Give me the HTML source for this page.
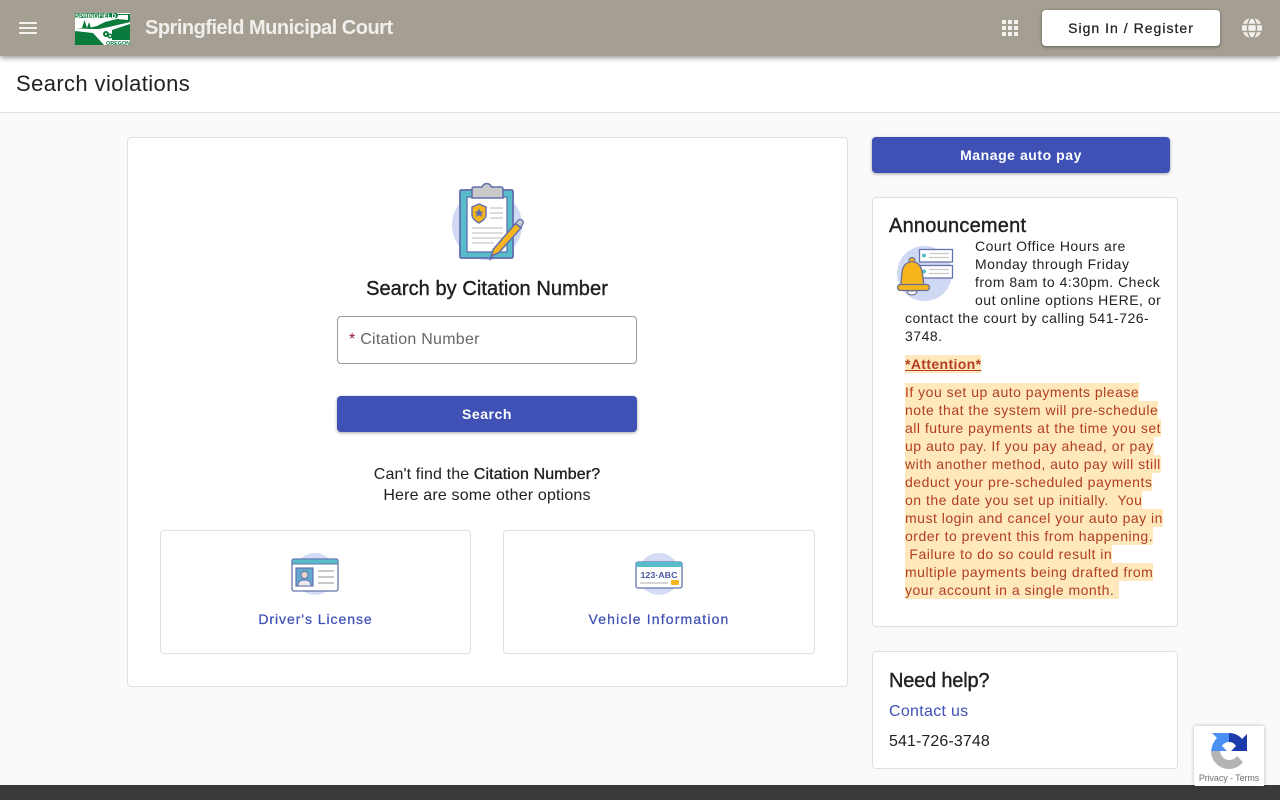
<!DOCTYPE html>
<html lang="en"><head><meta charset="utf-8"><title>Search violations</title>
<style>
html,body{margin:0;padding:0}
body{width:1280px;height:800px;overflow:hidden;position:relative;background:#fafafa;font-family:"Liberation Sans",Arial,sans-serif;color:#212121}
.a{position:absolute}
.t{position:absolute;white-space:nowrap}
.c{text-align:center}
.card{position:absolute;background:#fff;border:1px solid #e0e0e0;border-radius:4px;box-sizing:border-box}
.btn{position:absolute;background:#3f51b5;color:#fff;border-radius:4px;font-weight:700;font-size:14px;text-align:center;letter-spacing:.55px;box-shadow:0 1px 3px rgba(0,0,0,.35)}
.l{position:absolute;left:905px;white-space:nowrap;font-size:14px;line-height:18px;height:18px;color:#222;letter-spacing:.5px}
.h{background:#ffe8bc;color:#b03f22}
</style></head><body>
<div class="a" style="left:0;top:0;width:1280px;height:56px;background:#a59e92;box-shadow:0 2px 5px rgba(0,0,0,.4);z-index:2"></div>
<div style="position:absolute;left:0;top:0;z-index:3;width:1280px;height:56px">
<svg class="a" style="left:16px;top:16px" width="24" height="24" viewBox="0 0 24 24"><path fill="#f4f2ee" d="M3 18h18v-2H3v2zm0-5h18v-2H3v2zm0-7v2h18V6H3z"/></svg>
<svg class="a" style="left:75px;top:13px" width="55" height="32" viewBox="0 0 55 32">
<rect width="55" height="32" fill="#0b7a3d"/>
<path fill="#fff" d="M42 0h13v1H42zM0 5h42l1-3h10v5L42 6 30 9l-8 4-8 2H0z"/>
<path fill="#0b7a3d" d="M7 15l2.500-8 2.500 8zM12 15l2-6 2 6z"/>
<path fill="#fff" d="M0 15l14 1h10l10-2 21-5v2L40 16l-3 1v10h18v5H29L18 20 0 18z"/>
<circle cx="31" cy="21" r="3" fill="#0b7a3d"/><circle cx="35" cy="23" r="2.500" fill="#0b7a3d"/>
<circle cx="31" cy="21" r="1" fill="#fff"/><circle cx="35" cy="23" r="1" fill="#fff"/>
<text x="0" y="5" font-family="Liberation Sans" font-size="6" font-weight="700" fill="#fff" textLength="41" lengthAdjust="spacingAndGlyphs">SPRINGFIELD</text>
<text x="31" y="32" font-family="Liberation Sans" font-size="5.500" font-weight="700" fill="#0b7a3d" textLength="24" lengthAdjust="spacingAndGlyphs">OREGON</text>
</svg>
<div class="t" style="left:145px;top:16px;font-size:20px;line-height:24px;font-weight:700;color:#f1efeb;letter-spacing:-.5px">Springfield Municipal Court</div>
<svg class="a" style="left:1002px;top:20px" width="16" height="16" viewBox="0 0 16 16"><path fill="#f4f2ee" d="M0 0h4v4H0zM6 0h4v4H6zM12 0h4v4h-4zM0 6h4v4H0zM6 6h4v4H6zM12 6h4v4h-4zM0 12h4v4H0zM6 12h4v4H6zM12 12h4v4h-4z"/></svg>
<div class="a" style="left:1042px;top:10px;width:178px;height:36px;background:#fff;border-radius:4px;box-shadow:0 1px 3px rgba(0,0,0,.4);text-align:center;font-size:14px;line-height:36px;font-weight:400;letter-spacing:1.02px;color:#222;-webkit-text-stroke:.25px #222">Sign In / Register</div>
<svg class="a" style="left:1240px;top:16px" width="24" height="24" viewBox="0 0 24 24"><circle cx="12" cy="12" r="10" fill="#f4f2ee"/><g fill="none" stroke="#a59e92" stroke-width="1.500"><ellipse cx="12" cy="12" rx="4.500" ry="10"/><path d="M2.500 8.500h19M2.500 15.500h19"/></g></svg>
</div>
<div class="a" style="left:0;top:56px;width:1280px;height:57px;background:#fff;border-bottom:1px solid #e0e0e0;box-sizing:border-box"></div>
<div class="t" style="left:16px;top:70px;font-size:22px;line-height:28px;letter-spacing:.39px;color:#212121">Search violations</div>

<div class="card" style="left:127px;top:137px;width:721px;height:550px"></div>
<svg class="a" style="left:450px;top:180px" width="76" height="84" viewBox="0 0 76 84">
<circle cx="37" cy="45" r="35" fill="#cfd9f3"/>
<rect x="10" y="10" width="53" height="68" rx="1.500" fill="#58bcca" stroke="#5f6fae" stroke-width="1.800"/>
<rect x="17" y="17" width="40" height="55" fill="#fff" stroke="#5f6fae" stroke-width="1.300"/>
<path d="M22 18V9a2 2 0 0 1 2-2h8a5 5 0 0 1 9.500 0H51a2 2 0 0 1 2 2v9z" fill="#c9c9c9" stroke="#5f6fae" stroke-width="1.600"/>
<path d="M22 27l7-3 7 3v8c0 3-3.500 6-7 8-3.500-2-7-5-7-8z" fill="#f6b51d" stroke="#5f6fae" stroke-width="1.400"/>
<path d="M29 28.500l1.500 3 3 .4-2.200 2 .6 3-2.900-1.500-2.900 1.500.6-3-2.200-2 3-.4z" fill="#5f6fae"/>
<path d="M40 28h13M40 33h13M40 38h13M22 48h31M22 53h31M22 58h31M22 63h22" stroke="#c8c8c8" stroke-width="1.300"/>
<path d="M41 76l2.500-7 22-25.500 5.500 4.500-22.500 25z" fill="#f6b51d" stroke="#5f6fae" stroke-width="1.500"/>
<path d="M65.500 43.500l2.500-3a2.500 2.500 0 0 1 4.500 4l-1.500 3z" fill="#c9c9c9" stroke="#5f6fae" stroke-width="1.300"/>
<path d="M39 81l2-6 3 2.500z" fill="#5f6fae"/>
</svg>
<div class="t c" style="left:127px;width:720px;top:277px;font-size:20px;line-height:24px;letter-spacing:.07px;-webkit-text-stroke:.4px #212121">Search by Citation Number</div>
<div class="a" style="left:337px;top:316px;width:300px;height:48px;box-sizing:border-box;background:#fff;border:1px solid #9a9a9a;border-radius:4px"></div>
<div class="t" style="left:349px;top:329px;font-size:16px;line-height:22px;color:#666;letter-spacing:.26px"><span style="color:#8e1a3c">*</span> Citation Number</div>
<div class="btn" style="left:337px;top:396px;width:300px;height:36px;line-height:36px">Search</div>
<div class="t c" style="left:127px;width:720px;top:464px;font-size:16px;line-height:21px;letter-spacing:.12px">Can't find the <span style="-webkit-text-stroke:.35px #212121">Citation Number?</span></div>
<div class="t c" style="left:127px;width:720px;top:485px;font-size:16px;line-height:21px;letter-spacing:.17px">Here are some other options</div>

<div class="card" style="left:160px;top:530px;width:311px;height:124px"></div>
<div class="card" style="left:503px;top:530px;width:312px;height:124px"></div>
<svg class="a" style="left:290px;top:552px" width="50" height="44" viewBox="0 0 50 44">
<circle cx="25" cy="22" r="21" fill="#d3dcf4"/>
<rect x="2" y="7" width="46" height="32" rx="2" fill="#fff" stroke="#6573ae" stroke-width="1.300"/>
<path d="M2 12V9a2 2 0 0 1 2-2h42a2 2 0 0 1 2 2v3z" fill="#58bcc9" stroke="#6573ae" stroke-width="1"/>
<rect x="6" y="16" width="17" height="18" fill="#64a9d0" stroke="#6573ae" stroke-width="1.200"/>
<circle cx="14.500" cy="23" r="3.500" fill="#ead7c6" stroke="#6573ae"/>
<path d="M8 34c0-5 3-6 6.500-6s6.500 1 6.500 6z" fill="#e8e8ee" stroke="#6573ae"/>
<path d="M28 19h16M28 25h16M28 31h16" stroke="#c9c9c9" stroke-width="2"/>
</svg>
<svg class="a" style="left:634px;top:552px" width="50" height="44" viewBox="0 0 50 44">
<circle cx="25" cy="22" r="21" fill="#d3dcf4"/>
<rect x="2" y="10" width="46" height="26" rx="2" fill="#fff" stroke="#6573ae" stroke-width="1.300"/>
<path d="M2 15v-3a2 2 0 0 1 2-2h42a2 2 0 0 1 2 2v3z" fill="#58bcc9"/>
<text x="25" y="26" text-anchor="middle" font-family="Liberation Sans" font-size="8.500" font-weight="700" fill="#4a5a9f" textLength="37" lengthAdjust="spacingAndGlyphs">123·ABC</text>
<path d="M6 31h28" stroke="#c9c9c9" stroke-width="1.500"/>
<rect x="37" y="28" width="8" height="5" rx="1" fill="#f6b51d"/>
</svg>
<div class="t c" style="left:160px;width:311px;top:610px;font-size:14px;line-height:18px;color:#3f51b5;letter-spacing:.95px;-webkit-text-stroke:.25px #3f51b5">Driver's License</div>
<div class="t c" style="left:503px;width:312px;top:610px;font-size:14px;line-height:18px;color:#3f51b5;letter-spacing:1.15px;-webkit-text-stroke:.25px #3f51b5">Vehicle Information</div>

<div class="btn" style="left:872px;top:137px;width:298px;height:36px;line-height:36px">Manage auto pay</div>

<div class="card" style="left:872px;top:197px;width:306px;height:430px"></div>
<div class="t" style="left:889px;top:214px;font-size:20px;line-height:24px;letter-spacing:.23px;-webkit-text-stroke:.4px #212121">Announcement</div>
<svg class="a" style="left:895px;top:245px" width="60" height="58" viewBox="0 0 60 58">
<circle cx="29.500" cy="28.500" r="27.500" fill="#cfd9f3"/>
<rect x="24.500" y="4.500" width="33" height="12.500" fill="#fff" stroke="#6573ae" stroke-width="1.300"/>
<rect x="24.500" y="20.500" width="33" height="12.500" fill="#fff" stroke="#6573ae" stroke-width="1.300"/>
<circle cx="29" cy="10.500" r="2" fill="#58bcc9"/><circle cx="29" cy="26.500" r="2" fill="#58bcc9"/>
<path d="M34 8.500h20M34 12.500h20M34 24.500h20M34 28.500h20" stroke="#c9c9c9" stroke-width="1.200"/>
<path d="M12 46a5 4 0 0 0 10 0z" fill="#fff" stroke="#6b6f92" stroke-width="1.100"/>
<circle cx="17" cy="15.500" r="3" fill="#f6b51d" stroke="#6b6f92" stroke-width="1.200"/>
<path d="M6 40C7 30 5 18 17 16.500 29 18 27 30 29 40z" fill="#f6b51d" stroke="#6b6f92" stroke-width="1.300"/>
<rect x="2.500" y="39.500" width="32" height="6" rx="3" fill="#f6b51d" stroke="#6b6f92" stroke-width="1.300"/>
</svg>
<div class="l" style="left:975px;top:237px">Court Office Hours are</div>
<div class="l" style="left:975px;top:255px">Monday through Friday</div>
<div class="l" style="left:975px;top:273px">from 8am to 4:30pm. Check</div>
<div class="l" style="left:975px;top:291px">out online options HERE, or</div>
<div class="l" style="top:309px">contact the court by calling 541-726-</div>
<div class="l" style="top:327px">3748.</div>
<div class="l h" style="top:355px;font-weight:700;text-decoration:underline;letter-spacing:.37px">*Attention*</div>
<div class="l h" style="top:383px">If you set up auto payments please</div>
<div class="l h" style="top:401px">note that the system will pre-schedule</div>
<div class="l h" style="top:419px">all future payments at the time you set</div>
<div class="l h" style="top:437px">up auto pay. If you pay ahead, or pay</div>
<div class="l h" style="top:455px">with another method, auto pay will still</div>
<div class="l h" style="top:473px">deduct your pre-scheduled payments</div>
<div class="l h" style="top:491px">on the date you set up initially.&nbsp; You</div>
<div class="l h" style="top:509px">must login and cancel your auto pay in</div>
<div class="l h" style="top:527px">order to prevent this from happening.</div>
<div class="l h" style="top:545px">&nbsp;Failure to do so could result in</div>
<div class="l h" style="top:563px">multiple payments being drafted from</div>
<div class="l h" style="top:581px">your account in a single month.&nbsp;</div>

<div class="card" style="left:872px;top:651px;width:306px;height:118px"></div>
<div class="t" style="left:889px;top:669px;font-size:20px;line-height:24px;letter-spacing:-.2px;-webkit-text-stroke:.4px #212121">Need help?</div>
<div class="t" style="left:889px;top:701px;font-size:16px;line-height:21px;color:#3f51b5;letter-spacing:.3px">Contact us</div>
<div class="t" style="left:889px;top:731px;font-size:16px;line-height:21px;letter-spacing:.1px">541-726-3748</div>

<div class="a" style="left:0;top:785px;width:1280px;height:15px;background:#3a3a3a"></div>
<div class="a" style="left:1194px;top:726px;width:70px;height:60px;background:#fff;box-shadow:0 0 4px rgba(0,0,0,.25);overflow:hidden;z-index:4;border-radius:2px 0 0 2px">
<svg class="a" style="left:17px;top:7px" width="36" height="36" viewBox="0 0 36 36">
<path d="M0 18C1 12 3 8 6 5L1 0H18V9C15 9 12 11 11 13L16 18Z" fill="#4a90f5"/>
<path d="M18 0C23 0 28 2 31 6L36 1V18H20L25 13C23 10 21 9 18 9Z" fill="#1c3aa9"/>
<path d="M0 18H9C10 23 13 27 18 27 21 27 24 26 26 23L32 29C29 33 24 36 18 36 8 36 0 28 0 18Z" fill="#b4b4b4"/>
</svg>
<div class="t c" style="left:0;width:70px;top:47px;font-size:9px;line-height:11px;color:#6f6f6f;letter-spacing:-.1px">Privacy - Terms</div>
</div>
</body></html>
